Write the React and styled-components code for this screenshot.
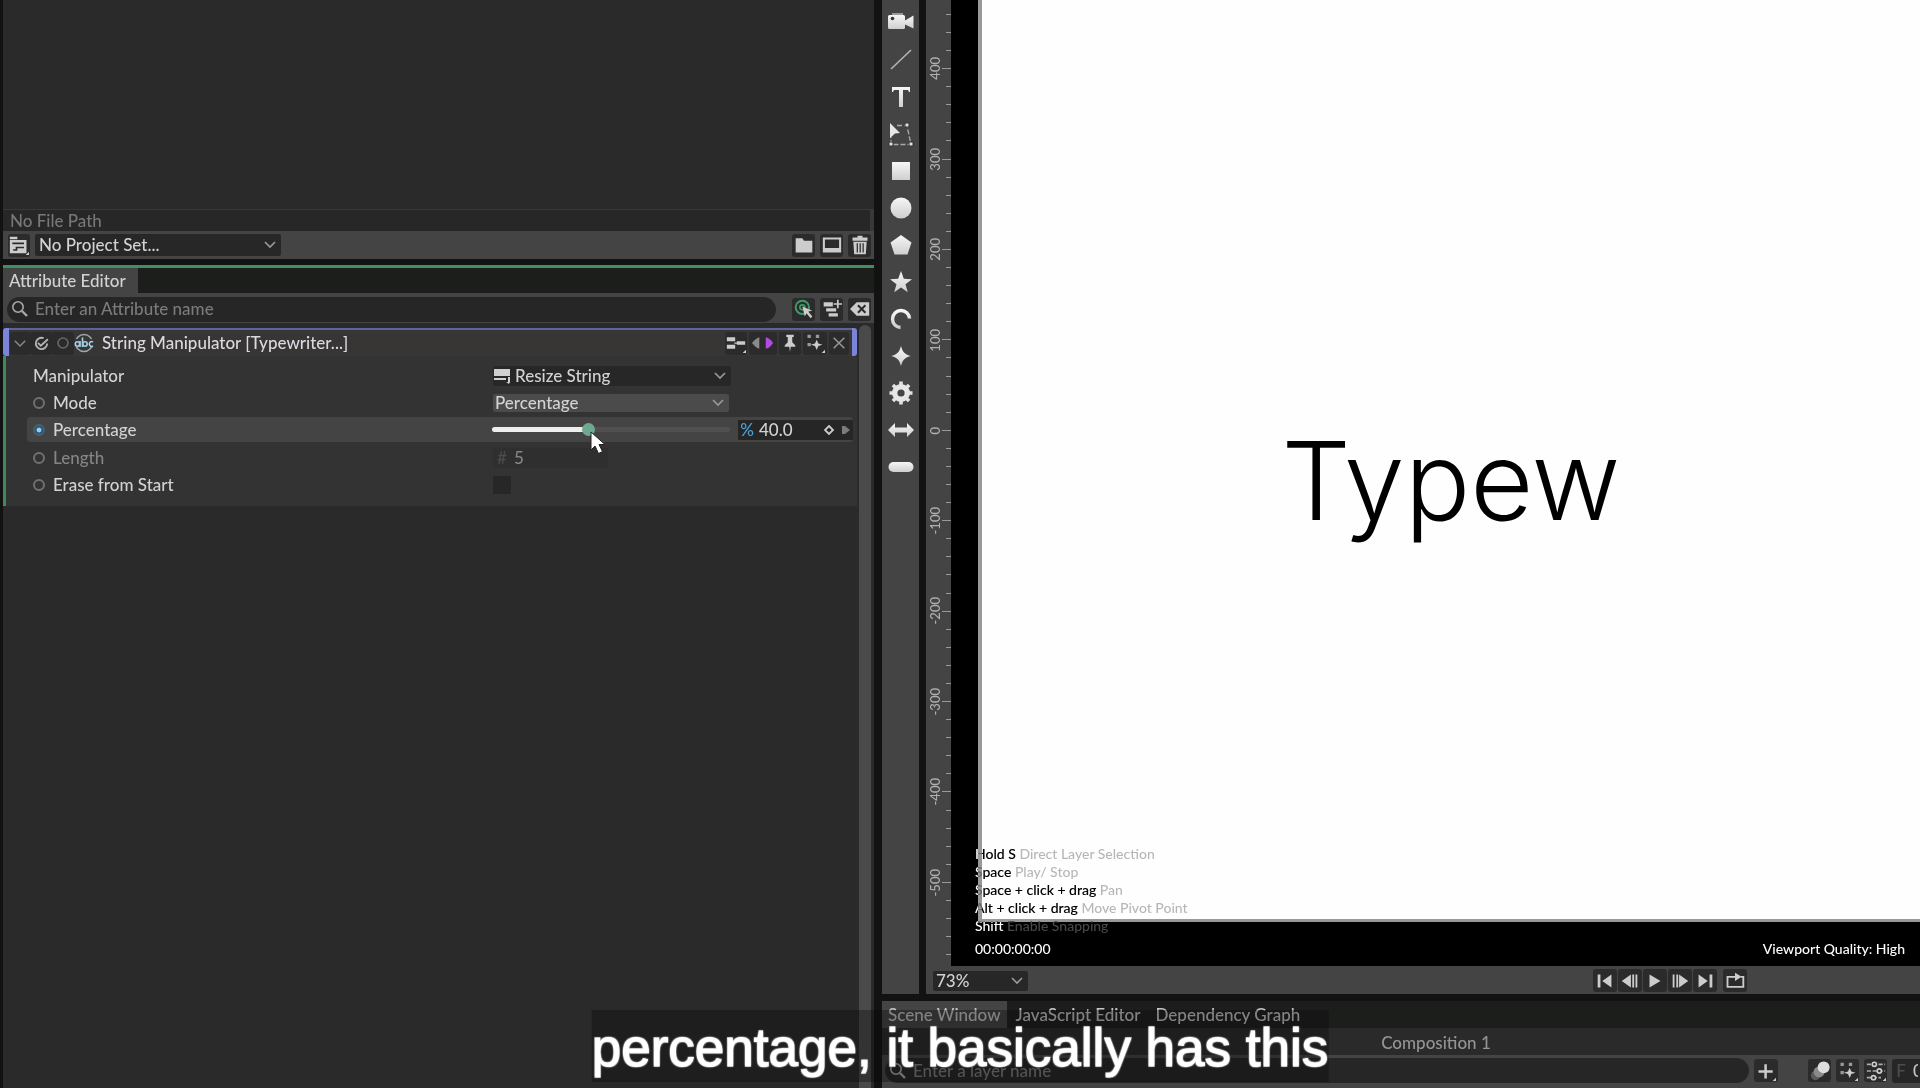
import { useState } from "react";
import styled, { createGlobalStyle, css } from "styled-components";

const RULER_MARKS = ["", 400, 300, 200, 100, 0, -100, -200, -300, -400, -500, ""];

const SHORTCUTS = [
    { keys: "Hold S", action: "Direct Layer Selection" },
    { keys: "Space", action: "Play/ Stop" },
    { keys: "Space + click + drag", action: "Pan" },
    { keys: "Alt + click + drag", action: "Move Pivot Point" },
    { keys: "Shift", action: "Enable Snapping" },
];

const TOOLS = [
    {
        name: "Camera",
        icon: (
            <>
                <path d="M4 3h11v3H4z" fill="#999" />
                <path d="M0 6.500q0-1.500 1.500-1.500h14q1.500 0 1.500 1.500v11q0 1.500-1.500 1.500h-14Q0 19 0 17.500zM17 10.500l8.500-5v13l-8.500-4z" fill="url(#metal)" />
                <circle cx="4.500" cy="8.500" r="1.800" fill="#333" />
            </>
        ),
    },
    { name: "Line", icon: <path d="M3 22 23 3" stroke="#b4b4b4" strokeWidth="1.600" /> },
    { name: "Text", icon: <path d="M4 3h18v5h-1l-1-2h-5v17h-4V6H6L5 8H4z" fill="url(#metal)" /> },
    {
        name: "Edit path",
        icon: (
            <>
                <path d="M9 4.500h10l4 19H3V16" fill="none" stroke="#aaa" strokeWidth="1.300" strokeDasharray="5 2" />
                <path d="m2 2 10 10-5 .5-5 4.500z" fill="#e6e6e6" />
                <path d="M17 2h4v4h-4zM1 21h4v4H1zM21 21h4v4h-4z" fill="#e0e0e0" stroke="#333" />
            </>
        ),
    },
    { name: "Rectangle", icon: <path d="M4 4h18v18H4z" fill="url(#metal)" /> },
    { name: "Ellipse", icon: <circle cx="13" cy="13" r="10.500" fill="url(#metal)" /> },
    { name: "Polygon", icon: <path d="m13 3 10.500 7.500-4 12h-13l-4-12z" fill="url(#metal)" /> },
    { name: "Star", icon: <path d="m13 2 2.800 7.800 8.200.4-6.500 5 2.300 8L13 18.500 6.200 23.200l2.300-8-6.500-5 8.200-.4z" fill="url(#metal)" /> },
    { name: "Arc", icon: <path d="M12.500 21.500A8.500 8.500 0 1 1 21.500 12.500" fill="none" stroke="url(#metal)" strokeWidth="3.400" /> },
    { name: "Super ellipse", icon: <path d="M13 3c1.500 6 4 8.500 10 10-6 1.500-8.500 4-10 10-1.500-6-4-8.500-10-10 6-1.500 8.500-4 10-10z" fill="url(#metal)" /> },
    {
        name: "Cogwheel",
        icon: (
            <>
                <path d="M13 1.500v23M1.500 13h23M4.900 4.900l16.200 16.200M21.100 4.900 4.900 21.100" stroke="#e2e2e2" strokeWidth="3.600" />
                <circle cx="13" cy="13" r="6.500" fill="none" stroke="#e6e6e6" strokeWidth="5" />
                <circle cx="13" cy="13" r="3.600" fill="#444" />
            </>
        ),
    },
    { name: "Arrow", icon: <path d="m0 13 7-7v4.500h12V6l7 7-7 7v-4.500H7V20z" fill="url(#metal)" /> },
    { name: "Capsule", icon: <rect x="0.500" y="8" width="25" height="10" rx="5" fill="url(#metal)" /> },
];

const TRANSPORT = [
    { name: "Go to start", d: "M4 5h3v14H4zM19 5v14L9 12z" },
    { name: "Previous frame", d: "M13 5v14L3 12zM14.500 5h2v14h-2zM18 5h2v14h-2z" },
    { name: "Play", d: "M6 5v14l12-7z" },
    { name: "Next frame", d: "M4 5h2v14H4zM8 5h2v14H8zM11 5v14l10-7z" },
    { name: "Go to end", d: "M5 5v14l10-7zM17 5h3v14h-3z" },
];

const GlobalStyle = createGlobalStyle`
    * {
        box-sizing: border-box;
    }
    body {
        margin: 0;
        background: #121212;
        color: #d2d2d2;
        font-family: Lato, "Liberation Sans", sans-serif;
        font-size: 17px;
        font-weight: 500;
        line-height: 22px;
        overflow: hidden;
    }
    button,
    input,
    select {
        font: inherit;
        color: inherit;
        border: 0;
        padding: 0;
        margin: 0;
        outline: 0;
    }
    button {
        background: none;
    }
`;

const Page = styled.div`
    position: relative;
    display: grid;
    grid-template-columns: minmax(0, 874fr) minmax(0, 1038fr);
    gap: 8px;
    height: 100vh;
`;

const LeftDock = styled.div`
    display: flex;
    flex-direction: column;
    padding-left: 3px;
    min-height: 0;
`;

const Assets = styled.div`
    flex: 0 0 209px;
    background: #2a2a2a;
`;

const FilePath = styled.div`
    padding-left: 7px;
    line-height: 21px;
    color: #777;
    background: #272727;
    border: 1px solid #383838;
    border-width: 1px 4px 0 0;
`;

const Bar = styled.div`
    display: flex;
    align-items: center;
    background: #444;
    flex: none;
`;

const ProjectBar = styled(Bar)`
    height: 28px;
    gap: 5px;
    padding: 0 3px 0 5px;
    margin-bottom: 6px;
`;

const Push = styled.div`
    flex: ${({ $width }) => ($width ? `0 0 ${$width}px` : 1)};
`;

const Glyph = styled.svg`
    display: block;
    flex: none;
    width: ${({ $size }) => $size || 24}px;
    height: ${({ $size }) => $size || 24}px;
`;

const IconButton = styled.button`
    display: flex;
    align-items: center;
    justify-content: center;
    flex: none;
    width: ${({ $width }) => $width || 23}px;
    height: 23px;
    border-radius: 3px;
    background: #2b2b2b;
`;

const SelectBox = styled.div`
    position: relative;
    display: flex;
    align-items: center;
    width: ${({ $width }) => $width}px;
    height: ${({ $height }) => $height || 20}px;
    background: ${({ $background }) => $background || "#272727"};
    border-radius: 2px;

    select {
        appearance: none;
        width: 100%;
        height: 100%;
        padding-left: ${({ $indent }) => $indent || 4}px;
        line-height: ${({ $height }) => $height || 20}px;
        background: transparent;
    }
    ${Glyph} {
        position: absolute;
        pointer-events: none;
    }
    ${Glyph}.chevron {
        right: 4px;
    }
    ${Glyph}.leading {
        left: 0;
    }
`;

const TabRow = styled.div`
    display: flex;
    gap: 3px;
    flex: none;
    background: #1c1e1c;
    ${({ $active }) =>
        $active &&
        css`
            border-top: 3px solid #3f8f63;
        `}
`;

const Tab = styled.button`
    height: ${({ $height }) => $height}px;
    min-width: ${({ $width }) => $width || 0}px;
    padding: 0 6px;
    text-align: left;
    background: ${({ $selected }) => ($selected ? "#444" : "transparent")};
`;

const SearchBar = styled(Bar)`
    height: ${({ $height }) => $height}px;
    padding: ${({ $padding }) => $padding};
    gap: 5px;
`;

const SearchField = styled.label`
    flex: 1;
    display: flex;
    align-items: center;
    gap: 6px;
    height: 25px;
    padding-left: 4px;
    margin-right: ${({ $after }) => $after}px;
    border-radius: 13px;
    background: #262626;

    input {
        flex: 1;
        min-width: 0;
        background: transparent;
    }
    input::placeholder {
        color: #7b7b7b;
        opacity: 1;
    }
`;

const Inspector = styled.div`
    flex: 1;
    min-height: 0;
    display: flex;
    gap: 2px;
    padding: 2px 3px 0 0;
    background: #2a2a2a;
`;

const Sections = styled.div`
    flex: 1;
    padding-top: 3px;
`;

const Scrollbar = styled.div`
    width: 12px;
    border-radius: 6px 6px 0 0;
    background: #4a4a4a;
`;

const SectionHeader = styled.div`
    display: flex;
    align-items: center;
    height: 28px;
    padding: 2px 3px 0 1px;
    border: solid #7a84d8;
    border-width: 0 5px 0 6px;
    border-radius: 3px;
    background: #373635;
    box-shadow: inset 0 2px #5f639c;
`;

const HeaderTitle = styled.div`
    margin-left: 8px;
    color: #dcd8e0;
`;

const HeaderTools = styled.div`
    display: flex;
    align-items: center;
    gap: 2px;
    margin-left: auto;
`;

const Attributes = styled.div`
    padding: 6px 4px 8px 21px;
    border-left: 3px solid #3d8a5c;
    background: #333;
`;

const AttributeRow = styled.div`
    display: grid;
    grid-template-columns: minmax(0, 460fr) minmax(0, 360fr);
    align-items: center;
    height: ${({ $highlight }) => ($highlight ? 25 : 27)}px;
    margin: ${({ $highlight }) => ($highlight ? "1px 0 2px" : 0)};
    padding-left: 6px;
    border-radius: 4px;
    background: ${({ $highlight }) => ($highlight ? "#444" : "transparent")};
    color: ${({ $dim }) => ($dim ? "#858585" : "#d2d2d2")};
`;

const AttributeName = styled.div`
    display: flex;
    align-items: center;
    gap: 8px;
`;

const Port = styled.span`
    width: 12px;
    height: 12px;
    border: 2px solid #707070;
    border-radius: 50%;
    ${({ $connected }) =>
        $connected &&
        css`
            border-color: #3f6274;
            background: radial-gradient(#8fd0f0 35%, #35536a 50%);
        `}
`;

const Control = styled.div`
    display: flex;
    align-items: center;
    gap: 8px;
`;

const SliderBox = styled.div`
    position: relative;
    display: flex;
    align-items: center;
    flex: 0 1 238px;
    min-width: 0;
    height: 25px;
    margin-left: -1px;
`;

const Slider = styled.input`
    appearance: none;
    width: 100%;
    height: 5px;
    border-radius: 3px;
    background: linear-gradient(to right, #eee ${({ value }) => value}%, #505050 ${({ value }) => value}%);

    &::-webkit-slider-thumb {
        appearance: none;
        width: 13px;
        height: 13px;
        border-radius: 50%;
        background: #6fa890;
    }
`;

const Cursor = styled.svg`
    position: absolute;
    left: 41%;
    top: 14px;
    width: 16px;
    height: 24px;
    z-index: 1;
`;

const NumberField = styled.label`
    display: flex;
    align-items: center;
    gap: 5px;
    width: ${({ $width }) => $width}px;
    height: 20px;
    padding: 0 2px;
    background: ${({ $background }) => $background};

    span {
        width: 14px;
        color: ${({ $unit }) => $unit};
        text-align: center;
    }
    input {
        flex: 1;
        min-width: 0;
        background: transparent;
    }
`;

const Check = styled.input`
    appearance: none;
    width: 18px;
    height: 18px;
    background: #272727;
`;

const RightDock = styled.div`
    display: flex;
    flex-direction: column;
    min-height: 0;
`;

const Workspace = styled.div`
    flex: 1;
    min-height: 0;
    display: flex;
    gap: 7px;
    margin-bottom: 7px;
`;

const Toolbar = styled.div`
    display: flex;
    flex-direction: column;
    align-items: center;
    width: 37px;
    padding-top: 4px;
    background: #444;
`;

const ToolButton = styled.button`
    display: flex;
    align-items: center;
    justify-content: center;
    width: 37px;
    height: 37px;
`;

const Viewport = styled.div`
    flex: 1;
    min-width: 0;
    display: flex;
    flex-direction: column;
`;

const Stage = styled.div`
    flex: 1;
    min-height: 0;
    display: flex;
`;

const Ruler = styled.div`
    display: flex;
    flex-direction: column;
    width: 25px;
    background: #444;
    overflow: hidden;
`;

const Marks = styled.div`
    flex: 1;
    display: flex;
    flex-direction: column;
    margin: -67px 0 -52px;
`;

const Mark = styled.div`
    flex: 1;
    display: flex;
    align-items: center;
    justify-content: space-between;
    padding-left: 2px;
    color: #b0b0b0;
    font-size: 13px;
    line-height: 14px;

    span {
        writing-mode: vertical-rl;
        transform: rotate(180deg);
    }
`;

const Ticks = styled.div`
    align-self: stretch;
    display: flex;
    flex-direction: column;
    align-items: flex-end;
    justify-content: space-around;
    width: 9px;
    margin-left: auto;

    i {
        width: 5px;
        height: 1px;
        background: #9a9a9a;
    }
    i:nth-child(3) {
        width: 9px;
    }
`;

const Canvas = styled.div`
    position: relative;
    flex: 1;
    min-width: 0;
    display: flex;
    padding: 0 0 44px 27px;
    background: #000;
`;

const Artboard = styled.div`
    flex: 1;
    display: flex;
    align-items: center;
    justify-content: center;
    padding-top: 40px;
    border: solid #999;
    border-width: 0 0 3px 4px;
    background: #fefefe;
    color: #000;
    font-family: Inter, sans-serif;
    font-size: 109px;
    font-weight: 300;
    line-height: 128px;
`;

const Hud = styled.div`
    position: absolute;
    left: 24px;
    right: 15px;
    bottom: 7px;
    color: #fff;
    font-size: 14px;
    line-height: 18px;
    mix-blend-mode: difference;
`;

const Shortcut = styled.div`
    span {
        color: #484848;
    }
`;

const HudFooter = styled.div`
    display: flex;
    justify-content: space-between;
    margin-top: 4px;
    line-height: 20px;
`;

const ViewportBar = styled(Bar)`
    height: 28px;
    padding: 1px 173px 0 7px;
`;

const Transport = styled.div`
    display: flex;
    gap: 1px;
    margin-left: auto;
    margin-right: 6px;
`;

const ScenePanel = styled.div`
    flex: none;
    color: #c4c4c4;
    background: #282828;
`;

const CompositionTitle = styled.div`
    height: 27px;
    padding-left: 70px;
    line-height: 30px;
    text-align: center;
    color: #949494;
    background: #2a2a2a;
`;

const FrameField = styled(NumberField)`
    border-radius: 3px 0 0 3px;
    height: 24px;
    flex: none;
    overflow: hidden;
`;

const Caption = styled.div`
    position: absolute;
    left: 50%;
    bottom: 6px;
    transform: translateX(-50%);
    height: 72px;
    line-height: 76px;
    white-space: nowrap;
    color: #fff;
    background: rgba(8, 8, 8, 0.35);
    font-family: "Liberation Sans", Arial, sans-serif;
    font-size: 53px;
    font-weight: 400;
    -webkit-text-stroke: 1px #fff;
    text-shadow: 1px 1px 1px #888, -1px -1px 1px #888, 1px -1px 1px #888, -1px 1px 1px #888;
`;

const Chevron = ({ className }) => (
    <Glyph className={className} $size={14} viewBox="0 0 14 14" aria-hidden="true">
        <path d="m2 4 5 5 5-5" fill="none" stroke="#9a9a9a" strokeWidth="1.600" />
    </Glyph>
);

const SearchIcon = () => (
    <Glyph $size={18} viewBox="0 0 18 18" aria-hidden="true">
        <circle cx="7" cy="7" r="5.200" fill="none" stroke="#a8a8a8" strokeWidth="1.600" />
        <path d="m11 11 5 5" stroke="#a8a8a8" strokeWidth="2.400" />
    </Glyph>
);

const Action = ({ name, width, size = 20, children }) => (
    <IconButton aria-label={name} $width={width}>
        <Glyph $size={size} viewBox="0 0 24 24" fill="#ccc">
            {children}
        </Glyph>
    </IconButton>
);

const Sparkles = () => (
    <>
        <path d="M3 2h4v4H3zM13 2h4v4h-4zM3 12h4v4H3z" fill="#999" />
        <path d="m14 8 2 4.500 5 1.500-5 1.500-2 5-2-5-5-1.500 5-1.500zM20 24h4v-4z" />
    </>
);

const Attribute = ({ name, htmlFor, port = true, connected, dim, children }) => (
    <AttributeRow $highlight={connected} $dim={dim}>
        <AttributeName>
            {port && <Port $connected={connected} />}
            <label htmlFor={htmlFor}>{name}</label>
        </AttributeName>
        <Control>{children}</Control>
    </AttributeRow>
);

const AttributeEditor = () => {
    const [percentage, setPercentage] = useState(40);

    return (
        <>
            <TabRow $active>
                <Tab $selected $height={25} $width={135}>Attribute Editor</Tab>
            </TabRow>
            <SearchBar $height={30} $padding="2px 3px 0 4px">
                <SearchField $after={11}>
                    <SearchIcon />
                    <input aria-label="Attribute name" placeholder="Enter an Attribute name" />
                </SearchField>
                <Action name="Isolate selection">
                    <circle cx="10" cy="10" r="8" fill="none" stroke="#3f9a68" strokeWidth="2.400" />
                    <circle cx="10" cy="10" r="3" fill="none" stroke="#3f9a68" strokeWidth="2" />
                    <path d="m10 9 12 5-5 1 5 6-2 2-5-6-2 4z" />
                </Action>
                <Action name="Add attribute">
                    <path d="M2 4h11v5H2zM5 11h12v4H5zM8 17h11v4H8zM18 1h2v4h4v2h-4v4h-2V7h-4V5h4z" />
                </Action>
                <Action name="Clear">
                    <path d="M8 4h15v16H8l-8-8z" />
                    <path d="m9.500 7.500 9 9M18.500 7.500l-9 9" stroke="#2b2b2b" strokeWidth="2.400" />
                </Action>
            </SearchBar>
            <Inspector>
                <Sections>
                    <SectionHeader>
                        <Action name="Collapse" width={20} size={14}>
                            <path d="m3 8 9 9 9-9" fill="none" stroke="#888" strokeWidth="2.500" />
                        </Action>
                        <Action name="Enable" width={22} size={17}>
                            <path d="M20 12a8 8 0 1 1-5-7.500M7 11l4 4 10-9" fill="none" stroke="#b4b4b4" strokeWidth="2.600" />
                        </Action>
                        <Action name="Solo" width={22} size={16}>
                            <circle cx="12" cy="12" r="7.500" fill="none" stroke="#666" strokeWidth="2.500" />
                        </Action>
                        <Glyph $size={20} viewBox="0 0 20 20" aria-hidden="true">
                            <circle cx="10" cy="10" r="8.500" fill="none" stroke="#9aa7ad" strokeWidth="1.600" />
                            <path d="M0 6h20v8H0z" fill="#373635" />
                            <g fill="none" stroke="#a6cfe8" strokeWidth="1.600">
                                <circle cx="3.500" cy="11" r="2.200" />
                                <path d="M6 8v6M8.500 4.500V14" />
                                <circle cx="11" cy="11" r="2.200" />
                                <path d="M19 9a2.400 2.400 0 1 0 0 4" />
                            </g>
                        </Glyph>
                        <HeaderTitle>String Manipulator [Typewriter...]</HeaderTitle>
                        <HeaderTools>
                            <Action name="Connections" width={22}>
                                <path d="M1 5h10v5H1zM1 14h10v5H1zM13 10h10v4H13zM10 11.500h4v1.500h-4zM20 24h4v-4z" />
                            </Action>
                            <Action name="In and out" width={28} size={22}>
                                <path d="M8 6v12q-3 0-8-6 5-6 8-6z" fill="#8a8a8a" />
                                <path d="M15 6q4 0 8 6-4 6-8 6z" fill="#b44be0" />
                            </Action>
                            <Action name="Pin" width={22} size={18}>
                                <path d="M7 1h10v3h-2v7l4 4v2h-6l-1 7-1-7H5v-2l4-4V4H7z" />
                            </Action>
                            <Action name="Presets" width={24}>
                                <Sparkles />
                            </Action>
                            <Action name="Close" width={20} size={16}>
                                <path d="m4 4 16 16M20 4 4 20" stroke="#999" strokeWidth="2.200" />
                            </Action>
                        </HeaderTools>
                    </SectionHeader>
                    <Attributes>
                        <Attribute name="Manipulator" htmlFor="manipulator" port={false}>
                            <SelectBox $width={238} $indent={22}>
                                <Glyph className="leading" $size={18} viewBox="0 0 18 18" aria-hidden="true">
                                    <path d="M1 2h16v7H1zM1 11h12v2H1zM15 10v5h-2l3 2 1-2V10z" fill="#d0d0d0" />
                                </Glyph>
                                <select id="manipulator">
                                    <option>Resize String</option>
                                </select>
                                <Chevron className="chevron" />
                            </SelectBox>
                        </Attribute>
                        <Attribute name="Mode" htmlFor="mode">
                            <SelectBox $width={236} $height={18} $indent={2} $background="#4b4b4b">
                                <select id="mode">
                                    <option>Percentage</option>
                                </select>
                                <Chevron className="chevron" />
                            </SelectBox>
                        </Attribute>
                        <Attribute name="Percentage" htmlFor="percentage" connected>
                            <SliderBox>
                                <Slider
                                    id="percentage"
                                    type="range"
                                    min="0"
                                    max="100"
                                    value={percentage}
                                    onChange={({ target }) => setPercentage(Number(target.value))}
                                />
                                <Cursor viewBox="0 0 16 24" aria-hidden="true">
                                    <path d="M1 1v18l4-4 3.500 7.500 4-2L9 13.500h6z" fill="#fff" stroke="#222" />
                                </Cursor>
                            </SliderBox>
                            <NumberField $width={115} $background="#262626" $unit="#4a9fd6">
                                <span>%</span>
                                <input aria-label="Percentage value" value={percentage.toFixed(1)} readOnly />
                                <Glyph $size={14} viewBox="0 0 14 14" aria-hidden="true">
                                    <path d="m7 3 4 4-4 4-4-4z" fill="none" stroke="#ccc" strokeWidth="1.800" />
                                </Glyph>
                                <Glyph $size={10} viewBox="0 0 10 10" aria-hidden="true">
                                    <path d="M1 1h3l5 4-5 4H1z" fill="#7c7c7c" />
                                </Glyph>
                            </NumberField>
                        </Attribute>
                        <Attribute name="Length" htmlFor="length" dim>
                            <NumberField as="div" $width={115} $background="#2f2f2f" $unit="#4c4c4c">
                                <span>#</span>
                                <input id="length" value="5" readOnly />
                            </NumberField>
                        </Attribute>
                        <Attribute name="Erase from Start" htmlFor="erase">
                            <Check id="erase" type="checkbox" />
                        </Attribute>
                    </Attributes>
                </Sections>
                <Scrollbar />
            </Inspector>
        </>
    );
};

const ViewportPanel = () => (
    <Viewport>
        <Stage>
            <Ruler>
                <Marks>
                    {RULER_MARKS.map((value, index) => (
                        <Mark key={index}>
                            {value !== "" && <span>{value}</span>}
                            <Ticks>
                                <i />
                                <i />
                                <i />
                                <i />
                                <i />
                            </Ticks>
                        </Mark>
                    ))}
                </Marks>
            </Ruler>
            <Canvas>
                <Artboard>Typew</Artboard>
                <Hud>
                    {SHORTCUTS.map(({ keys, action }) => (
                        <Shortcut key={keys}>
                            {keys} <span>{action}</span>
                        </Shortcut>
                    ))}
                    <HudFooter>
                        <div>00:00:00:00</div>
                        <div>Viewport Quality: High</div>
                    </HudFooter>
                </Hud>
            </Canvas>
        </Stage>
        <ViewportBar>
            <SelectBox $width={95} $indent={3}>
                <select aria-label="Zoom">
                    <option>73%</option>
                </select>
                <Chevron className="chevron" />
            </SelectBox>
            <Transport>
                {TRANSPORT.map(({ name, d }) => (
                    <Action key={name} name={name} width={24} size={22}>
                        <path d={d} />
                    </Action>
                ))}
            </Transport>
            <Action name="Loop" width={24}>
                <path d="M9 7H3v12h19V7h-3" fill="none" stroke="#ccc" strokeWidth="2.200" />
                <path d="M8 6h4V2l8 5-8 5V8H8z" />
            </Action>
        </ViewportBar>
    </Viewport>
);

const SceneWindow = () => (
    <ScenePanel>
        <TabRow>
            <Tab $selected $height={27}>Scene Window</Tab>
            <Tab $height={27}>JavaScript Editor</Tab>
            <Tab $height={27}>Dependency Graph</Tab>
        </TabRow>
        <CompositionTitle>Composition 1</CompositionTitle>
        <SearchBar $height={33} $padding="0 0 2px 3px">
            <SearchField $after={0}>
                <SearchIcon />
                <input aria-label="Layer name" placeholder="Enter a layer name" />
            </SearchField>
            <Action name="Add layer" width={24}>
                <path d="M10 4h3v7h7v3h-7v7h-3v-7H3v-3h7zM20 24h4v-4z" />
            </Action>
            <Push $width={20} />
            <Action name="Motion blur" size={22}>
                <circle cx="7" cy="17" r="5" fill="#5a5a5a" />
                <circle cx="11" cy="13" r="6" fill="#8a8a8a" />
                <circle cx="16" cy="8" r="6.500" fill="#ddd" />
            </Action>
            <Action name="Layer presets">
                <Sparkles />
            </Action>
            <Action name="Filters">
                <path d="M1 4h22M1 12h22M1 20h17" stroke="#aaa" strokeWidth="2" strokeDasharray="5 2" />
                <g fill="#2b2b2b" stroke="#ccc" strokeWidth="2">
                    <circle cx="10" cy="4" r="2.500" />
                    <circle cx="16" cy="12" r="2.500" />
                    <circle cx="9" cy="20" r="2.500" />
                </g>
                <path d="M20 24h4v-4z" />
            </Action>
            <FrameField $width={28} $background="#262626" $unit="#4c4c4c">
                <span>F</span>
                <input aria-label="Frame" value="0" readOnly />
            </FrameField>
        </SearchBar>
    </ScenePanel>
);

const App = () => (
    <Page>
        <GlobalStyle />
        <LeftDock>
            <Assets />
            <FilePath>No File Path</FilePath>
            <ProjectBar>
                <Action name="Project" width={22}>
                    <path d="M1 2h9v3H1zM1 6h20v16H1zM20 24h4v-4z" />
                    <path d="M4 10h14M5 18h4v-3h9" fill="none" stroke="#2b2b2b" strokeWidth="2" />
                </Action>
                <SelectBox $width={246} $height={22}>
                    <select aria-label="Project set">
                        <option>No Project Set...</option>
                    </select>
                    <Chevron className="chevron" />
                </SelectBox>
                <Push />
                <Action name="New folder">
                    <path d="M2 4h8l2 3h10v14H2z" />
                </Action>
                <Action name="New composition">
                    <path d="M1 3h22v18H1zM3.500 5.500v10h17v-10z" fillRule="evenodd" />
                </Action>
                <Action name="Delete">
                    <path d="M9 1h6v2h6v4H3V3h6zM4 8h16l-1 15H5zM8 10v11h1.500V10zM11.500 10v11H13V10zM15 10v11h1.500V10z" fillRule="evenodd" />
                </Action>
            </ProjectBar>
            <AttributeEditor />
        </LeftDock>
        <RightDock>
            <Workspace>
                <Toolbar>
                    {TOOLS.map(({ name, icon }) => (
                        <ToolButton key={name} aria-label={name}>
                            <Glyph $size={26} viewBox="0 0 26 26">
                                <defs>
                                    <linearGradient id="metal" x1="0" y1="0" x2="0" y2="1">
                                        <stop offset="0" stopColor="#f6f6f6" />
                                        <stop offset="1" stopColor="#cfcfcf" />
                                    </linearGradient>
                                </defs>
                                {icon}
                            </Glyph>
                        </ToolButton>
                    ))}
                </Toolbar>
                <ViewportPanel />
            </Workspace>
            <SceneWindow />
        </RightDock>
        <Caption>percentage, it basically has this</Caption>
    </Page>
);

export default App;
